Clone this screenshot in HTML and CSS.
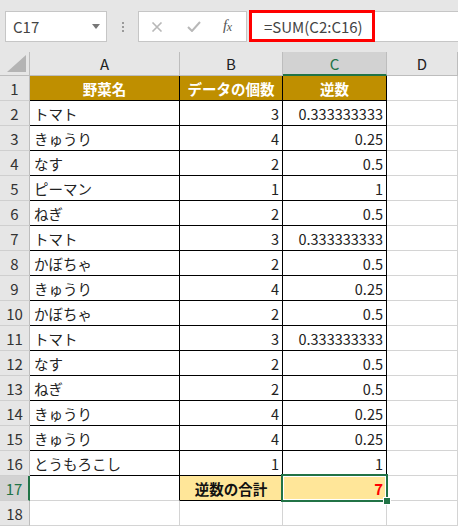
FILE: index.html
```html
<!DOCTYPE html>
<html lang="ja">
<head>
<meta charset="utf-8">
<link rel="stylesheet" href="styles.css">
</head>
<body>
<div class="toolbar">
  <div class="namebox">
    <span class="name">C17</span>
    <svg class="drop" width="8" height="5" viewBox="0 0 8 5"><path d="M0 0H8L4 5Z" fill="#777"/></svg>
  </div>
  <div class="dots"><i></i><i></i><i></i></div>
  <div class="fbar">
    <div class="fbtns">
      <svg class="ico" width="12" height="10" viewBox="0 0 12 10"><path d="M1.5 0.5L10.5 9.5M10.5 0.5L1.5 9.5" stroke="#b8b8b8" stroke-width="1.6" fill="none"/></svg>
      <svg class="ico" width="14" height="11" viewBox="0 0 14 11"><path d="M1 6L5 10L13 1" stroke="#b8b8b8" stroke-width="2" fill="none"/></svg>
      <span class="fx">f<span class="fxx">x</span></span>
    </div>
    <div class="finput"><div class="redbox">=SUM(C2:C16)</div></div>
  </div>
</div>
<div class="sheet">
  <div class="corner"><svg width="19" height="17" viewBox="0 0 19 17"><path d="M19 0V17H0Z" fill="#b4b4b4"/></svg></div>
  <div class="ch">A</div><div class="ch">B</div><div class="ch sel">C</div><div class="ch">D</div>

  <div class="rh">1</div><div class="c hd b">野菜名</div><div class="c hd b">データの個数</div><div class="c hd b">逆数</div><div class="c"></div>
  <div class="rh">2</div><div class="c t b">トマト</div><div class="c n b">3</div><div class="c n b">0.333333333</div><div class="c"></div>
  <div class="rh">3</div><div class="c t b">きゅうり</div><div class="c n b">4</div><div class="c n b">0.25</div><div class="c"></div>
  <div class="rh">4</div><div class="c t b">なす</div><div class="c n b">2</div><div class="c n b">0.5</div><div class="c"></div>
  <div class="rh">5</div><div class="c t b">ピーマン</div><div class="c n b">1</div><div class="c n b">1</div><div class="c"></div>
  <div class="rh">6</div><div class="c t b">ねぎ</div><div class="c n b">2</div><div class="c n b">0.5</div><div class="c"></div>
  <div class="rh">7</div><div class="c t b">トマト</div><div class="c n b">3</div><div class="c n b">0.333333333</div><div class="c"></div>
  <div class="rh">8</div><div class="c t b">かぼちゃ</div><div class="c n b">2</div><div class="c n b">0.5</div><div class="c"></div>
  <div class="rh">9</div><div class="c t b">きゅうり</div><div class="c n b">4</div><div class="c n b">0.25</div><div class="c"></div>
  <div class="rh">10</div><div class="c t b">かぼちゃ</div><div class="c n b">2</div><div class="c n b">0.5</div><div class="c"></div>
  <div class="rh">11</div><div class="c t b">トマト</div><div class="c n b">3</div><div class="c n b">0.333333333</div><div class="c"></div>
  <div class="rh">12</div><div class="c t b">なす</div><div class="c n b">2</div><div class="c n b">0.5</div><div class="c"></div>
  <div class="rh">13</div><div class="c t b">ねぎ</div><div class="c n b">2</div><div class="c n b">0.5</div><div class="c"></div>
  <div class="rh">14</div><div class="c t b">きゅうり</div><div class="c n b">4</div><div class="c n b">0.25</div><div class="c"></div>
  <div class="rh">15</div><div class="c t b">きゅうり</div><div class="c n b">4</div><div class="c n b">0.25</div><div class="c"></div>
  <div class="rh">16</div><div class="c t b">とうもろこし</div><div class="c n b">1</div><div class="c n b">1</div><div class="c"></div>
  <div class="rh selr">17</div><div class="c br"></div><div class="c sumlabel b">逆数の合計</div><div class="c n total b active">7</div><div class="c"></div>
  <div class="rh">18</div><div class="c"></div><div class="c"></div><div class="c"></div><div class="c"></div>
</div>
</body>
</html>
```

FILE: styles.css
```css
* { box-sizing: border-box; }
html, body { margin: 0; padding: 0; background: #fff; }
body {
  width: 458px;
  height: 527px;
  overflow: hidden;
  font-family: "Noto Sans CJK JP", "Noto Sans", sans-serif;
  color: #222;
}
.toolbar {
  height: 52px;
  background: #e6e6e6;
  display: flex;
  align-items: flex-start;
  padding: 11px 0 0 5px;
}
.namebox {
  width: 102px;
  height: 31px;
  background: #fff;
  border: 1px solid #c6c6c6;
  display: flex;
  align-items: center;
  justify-content: space-between;
  padding: 0 6px 0 7px;
}
.name { font-size: 15px; color: #444; }
.drop { margin-top: -1px; }
.dots {
  width: 31px;
  height: 31px;
  display: flex;
  flex-direction: column;
  align-items: center;
  justify-content: center;
  gap: 2px;
}
.dots i {
  display: block;
  width: 2px;
  height: 2px;
  background: #9a9a9a;
}
.fbar {
  flex: 1;
  height: 31px;
  display: flex;
  align-items: stretch;
}
.fbtns {
  width: 109px;
  background: #fff;
  border: 1px solid #c6c6c6;
  display: flex;
  align-items: center;
  padding-left: 12px;
}
.fbtns .ico:first-child { margin-right: 24px; }
.fbtns .ico:nth-child(2) { margin-right: 22px; }
.fx {
  font-family: "Liberation Serif", serif;
  font-style: italic;
  font-size: 15px;
  color: #555;
  margin-top: -2px;
  letter-spacing: -0.5px;
}
.fxx { font-size: 12px; position: relative; top: 1px; }
.finput {
  flex: 1;
  background: #fff;
  margin-left: 2px;
  border-top: 1px solid #c6c6c6;
  border-bottom: 1px solid #c6c6c6;
}
.redbox {
  width: 126px;
  height: 32px;
  margin-top: -2px;
  border: 3px solid #ff0000;
  display: flex;
  align-items: center;
  padding-left: 12px;
  font-size: 15px;
  color: #444;
}
.sheet {
  display: grid;
  grid-template-columns: 30px 150px 103px 104px 71px;
  grid-template-rows: 24px;
  grid-auto-rows: 25px;
  font-size: 14.5px;
}
.corner {
  background: #e6e6e6;
  border-right: 1px solid #bdbdbd;
  border-bottom: 1px solid #bdbdbd;
  display: flex;
  align-items: flex-end;
  justify-content: flex-end;
  padding: 0 3px 3px 0;
}
.ch {
  background: #e6e6e6;
  border-right: 1px solid #bdbdbd;
  border-bottom: 1px solid #bdbdbd;
  display: flex;
  align-items: center;
  justify-content: center;
  font-size: 15px;
  color: #222;
}
.ch.sel {
  background: #d2d2d2;
  color: #217346;
  border-bottom: 2px solid #217346;
}
.rh {
  background: #e6e6e6;
  border-right: 1px solid #bdbdbd;
  border-bottom: 1px solid #cfcfcf;
  display: flex;
  align-items: center;
  justify-content: center;
  font-size: 15px;
  color: #333;
}
.rh.selr {
  background: #d2d2d2;
  color: #217346;
  border-right: 2px solid #217346;
}
.c {
  border-right: 1px solid #d4d4d4;
  border-bottom: 1px solid #d4d4d4;
  display: flex;
  align-items: center;
  white-space: nowrap;
  overflow: hidden;
}
.c.b {
  border-right-color: #000;
  border-bottom-color: #000;
}
.c.br { border-right-color: #000; }
.hd {
  background: #bf8f00;
  color: #fff;
  font-weight: bold;
  justify-content: center;
}
.t { padding-left: 4px; color: #222; }
.n { justify-content: flex-end; padding-right: 3px; color: #222; }
.sumlabel {
  background: #ffe699;
  font-weight: bold;
  justify-content: center;
  color: #111;
}
.total {
  background: #ffe699;
  color: #ff0000;
  font-weight: bold;
  font-size: 15px;
  position: relative;
  overflow: visible;
}
.active::after {
  content: "";
  position: absolute;
  left: -2px;
  top: -2px;
  right: -2px;
  bottom: -2px;
  border: 2px solid #217346;
  box-shadow: inset 0 0 0 1px #fff;
  pointer-events: none;
}
.active::before {
  content: "";
  position: absolute;
  right: -5px;
  bottom: -5px;
  width: 6px;
  height: 6px;
  background: #217346;
  border: 1px solid #fff;
  z-index: 2;
}
```
